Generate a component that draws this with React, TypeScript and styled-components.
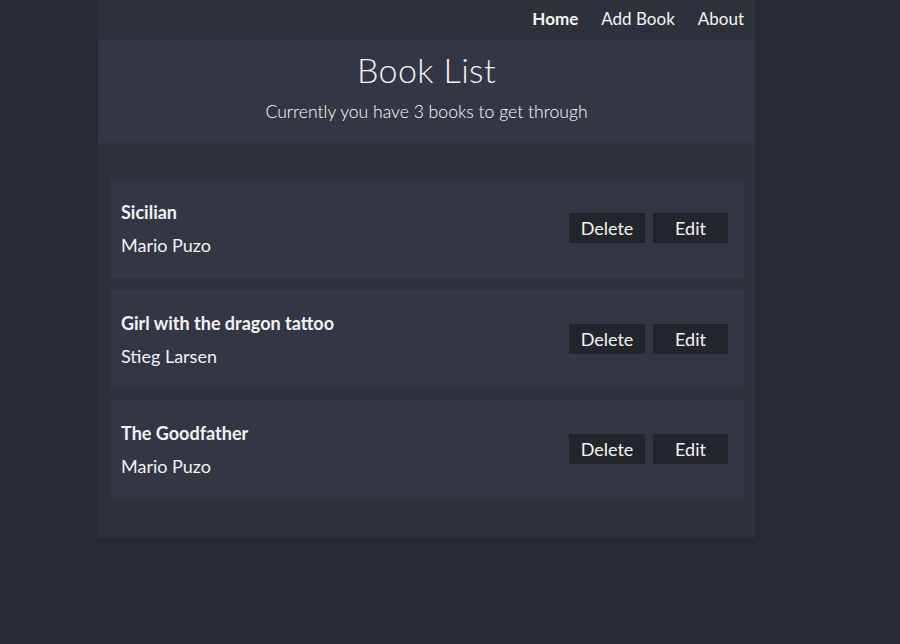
import React from "react";
import styled, { createGlobalStyle } from "styled-components";

const Global = createGlobalStyle`
  html, body { margin: 0; padding: 0; background: #272a33; }
  body { font-family: Lato, "Noto Sans", sans-serif; color: #f2f2f2; }
  * { box-sizing: border-box; }
`;

const Container = styled.div`
  width: 657px;
  margin-left: 98px;
  background: #2d313b;
  padding-bottom: 39px;
`;

const Nav = styled.nav`
  height: 40px;
  display: flex;
  justify-content: flex-end;
  align-items: center;
  gap: 23px;
  padding-right: 11px;
`;

const NavLink = styled.a<{ $active?: boolean }>`
  font-size: 17px;
  font-weight: ${(p) => (p.$active ? 700 : 400)};
  color: #f6f6f6;
  text-decoration: none;
  line-height: 1;
  margin-top: -3px;
`;

const Header = styled.header`
  background: #333744;
  height: 103px;
  display: flex;
  flex-direction: column;
  align-items: center;
  padding-top: 10px;
`;

const Title = styled.h1`
  margin: 0;
  font-size: 34px;
  font-weight: 300;
  line-height: 40px;
  letter-spacing: 0.4px;
  color: #f2f2f2;
`;

const Subtitle = styled.p`
  margin: 11px 0 0;
  font-size: 17.6px;
  font-weight: 300;
  line-height: 22px;
  color: #ffffff;
`;

const List = styled.ul`
  list-style: none;
  margin: 36px 11px 0 12px;
  padding: 0;
  display: flex;
  flex-direction: column;
  gap: 11.5px;
`;

const Card = styled.li`
  background: #333744;
  height: 99px;
  display: flex;
  align-items: center;
  justify-content: space-between;
  padding: 0 16px 0 11px;
`;

const Info = styled.div`
  display: flex;
  flex-direction: column;
  gap: 11px;
`;

const BookTitle = styled.div`
  font-size: 18px;
  font-weight: 700;
  line-height: 22px;
`;

const Author = styled.div`
  font-size: 18px;
  font-weight: 400;
  line-height: 22px;
`;

const Actions = styled.div`
  display: flex;
  gap: 8px;
  margin-top: -1px;
`;

const Button = styled.button<{ $w: number }>`
  width: ${(p) => p.$w}px;
  height: 30px;
  background: #22252c;
  border: none;
  color: #f4f4f4;
  font-family: Lato, "Noto Sans", sans-serif;
  font-size: 18px;
  line-height: 30px;
  padding: 0;
  cursor: pointer;
`;

const books = [
  { title: "Sicilian", author: "Mario Puzo" },
  { title: "Girl with the dragon tattoo", author: "Stieg Larsen" },
  { title: "The Goodfather", author: "Mario Puzo" },
];

export default function App() {
  return (
    <>
      <Global />
      <Container>
        <Nav>
          <NavLink $active href="#">Home</NavLink>
          <NavLink href="#">Add Book</NavLink>
          <NavLink href="#">About</NavLink>
        </Nav>
        <Header>
          <Title>Book List</Title>
          <Subtitle>Currently you have 3 books to get through</Subtitle>
        </Header>
        <List>
          {books.map((b) => (
            <Card key={b.title}>
              <Info>
                <BookTitle>{b.title}</BookTitle>
                <Author>{b.author}</Author>
              </Info>
              <Actions>
                <Button $w={76}>Delete</Button>
                <Button $w={75}>Edit</Button>
              </Actions>
            </Card>
          ))}
        </List>
      </Container>
    </>
  );
}
